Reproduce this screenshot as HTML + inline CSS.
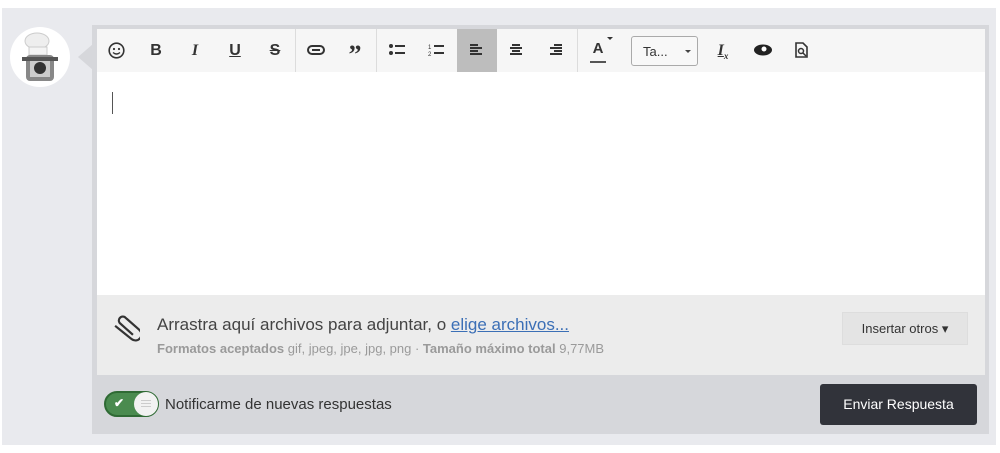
<!DOCTYPE html><html><head><style>
*{margin:0;padding:0;box-sizing:border-box}
body{width:1000px;height:453px;background:#fff;font-family:"Liberation Sans",sans-serif;position:relative;overflow:hidden}
.bg{position:absolute;left:2px;top:8px;width:994px;height:437px;background:#e9eaee}
.av{position:absolute;left:10px;top:27px;width:60px;height:60px;border-radius:50%;background:#fff;overflow:hidden}
.arrow{position:absolute;left:78px;top:44px;width:0;height:0;border-top:13px solid transparent;border-bottom:13px solid transparent;border-right:15px solid #d6d7db}
.box{position:absolute;left:92px;top:25px;width:897px;height:409px;background:#d6d7db}
.tb{position:absolute;left:97px;top:29px;width:888px;height:43px;background:#f6f6f6}
.ed{position:absolute;left:97px;top:72px;width:888px;height:223px;background:#fff}
.att{position:absolute;left:97px;top:295px;width:888px;height:80px;background:#ececec}
.b{position:absolute;top:29px;height:43px;width:40px;text-align:center;line-height:43px;font-size:16px;color:#333;font-weight:bold}
.sep{position:absolute;top:29px;width:1px;height:43px;background:#dcdcdc}
</style></head><body>
<div class="bg"></div>
<div class="av"><svg width="60" height="60"><ellipse cx="27" cy="14" rx="12" ry="8" fill="#eee" stroke="#ccc"/><rect x="19" y="20" width="18" height="8" fill="#f4f4f4" stroke="#ccc"/><rect x="16" y="28" width="28" height="26" rx="4" fill="#888"/><rect x="20" y="32" width="20" height="18" fill="#ccc"/><circle cx="30" cy="41" r="6" fill="#333"/><rect x="12" y="30" width="36" height="4" fill="#555"/></svg></div>
<div class="arrow"></div>
<div class="box"></div>
<div class="tb"></div>
<div class="ed"><div style="position:absolute;left:15px;top:20px;width:1px;height:22px;background:#555"></div></div>
<div class="att"></div>
<div style="position:absolute;left:457px;top:29px;width:40px;height:43px;background:#bdbdbd"></div>
<div class="sep" style="left:295px"></div><div class="sep" style="left:376px"></div><div class="sep" style="left:577px"></div>
<svg style="position:absolute;left:108px;top:42px" width="17" height="17"><circle cx="8.5" cy="8.5" r="7.3" fill="none" stroke="#333" stroke-width="1.6"/><circle cx="6" cy="7" r="1.1" fill="#333"/><circle cx="11" cy="7" r="1.1" fill="#333"/><path d="M5 10.5q3.5 3 7 0" fill="none" stroke="#333" stroke-width="1.4"/></svg>
<div class="b" style="left:136px">B</div>
<div class="b" style="left:175px;font-style:italic;font-family:'Liberation Serif',serif">I</div>
<div class="b" style="left:215px;text-decoration:underline">U</div>
<div class="b" style="left:255px;text-decoration:line-through">S</div>
<svg style="position:absolute;left:307px;top:45px" width="18" height="10"><rect x="1" y="1" width="16" height="8" rx="4" fill="none" stroke="#333" stroke-width="2"/><rect x="5" y="4" width="8" height="2" fill="#333"/></svg>
<div class="b" style="left:335px;font-family:'Liberation Serif',serif;font-size:26px;line-height:52px">”</div>
<svg style="position:absolute;left:388px;top:43px" width="18" height="14"><circle cx="3" cy="3" r="2" fill="#333"/><circle cx="3" cy="10" r="2" fill="#333"/><rect x="7" y="2" width="10" height="2" fill="#333"/><rect x="7" y="9" width="10" height="2" fill="#333"/></svg>
<svg style="position:absolute;left:428px;top:43px" width="18" height="14"><text x="0" y="6" font-size="6" fill="#333">1</text><text x="0" y="13" font-size="6" fill="#333">2</text><rect x="6" y="2" width="10" height="2" fill="#333"/><rect x="6" y="9" width="10" height="2" fill="#333"/></svg>
<svg style="position:absolute;left:470px;top:44px" width="14" height="12"><rect x="0" y="0" width="8" height="2" fill="#333"/><rect x="0" y="3" width="12" height="2" fill="#333"/><rect x="0" y="6" width="8" height="2" fill="#333"/><rect x="0" y="9" width="12" height="2" fill="#333"/></svg>
<svg style="position:absolute;left:509px;top:44px" width="14" height="12"><rect x="3" y="0" width="8" height="2" fill="#333"/><rect x="1" y="3" width="12" height="2" fill="#333"/><rect x="3" y="6" width="8" height="2" fill="#333"/><rect x="1" y="9" width="12" height="2" fill="#333"/></svg>
<svg style="position:absolute;left:549px;top:44px" width="14" height="12"><rect x="5" y="0" width="8" height="2" fill="#333"/><rect x="1" y="3" width="12" height="2" fill="#333"/><rect x="5" y="6" width="8" height="2" fill="#333"/><rect x="1" y="9" width="12" height="2" fill="#333"/></svg>
<div class="b" style="left:578px;font-size:15px;line-height:40px">A</div>
<div style="position:absolute;left:590px;top:61px;width:16px;height:2px;background:#555"></div>
<div style="position:absolute;left:607px;top:37px;border-left:3px solid transparent;border-right:3px solid transparent;border-top:3px solid #333"></div>
<div style="position:absolute;left:631px;top:36px;width:67px;height:30px;border:1px solid #aaa;border-radius:3px;background:#f8f8f8;font-size:13px;color:#333;padding:7px 0 0 11px">Ta...<span style="position:absolute;left:53px;top:13px;border-left:3px solid transparent;border-right:3px solid transparent;border-top:3px solid #444"></span></div>
<div class="b" style="left:703px;font-style:italic;font-family:'Liberation Serif',serif;text-decoration:underline">I<sub style="font-size:9px;text-decoration:none">x</sub></div>
<svg style="position:absolute;left:754px;top:44px" width="18" height="12"><ellipse cx="9" cy="6" rx="9" ry="5.5" fill="#222"/><circle cx="10" cy="5" r="2.5" fill="#fff"/></svg>
<svg style="position:absolute;left:795px;top:42px" width="13" height="16"><path d="M1 1h7l4 4v10H1z" fill="none" stroke="#333" stroke-width="1.6"/><circle cx="6" cy="9" r="2.5" fill="none" stroke="#333" stroke-width="1.5"/><path d="M8 11l3 3" stroke="#333" stroke-width="1.5"/></svg>
<svg style="position:absolute;left:112px;top:314px" width="28" height="32" viewBox="0 0 28 32"><path d="M20 22L9 8a4 4 0 0 1 6-5l12 15a6 6 0 0 1-9 8L4 10" fill="none" stroke="#333" stroke-width="2.2" transform="rotate(-10 14 16)"/></svg>
<div style="position:absolute;left:157px;top:315px;font-size:17px;color:#444">Arrastra aquí archivos para adjuntar, o <span style="color:#3b6fb6;text-decoration:underline">elige archivos...</span></div>
<div style="position:absolute;left:157px;top:341px;font-size:13px;color:#9a9a9a"><b>Formatos aceptados</b> gif, jpeg, jpe, jpg, png · <b>Tamaño máximo total</b> 9,77MB</div>
<div style="position:absolute;left:842px;top:312px;width:126px;height:33px;background:#e4e4e4;border:1px solid #ddd;font-size:13px;color:#333;text-align:center;line-height:31px">Insertar otros ▾</div>
<div style="position:absolute;left:104px;top:391px;width:55px;height:26px;border-radius:13px;background:#4a8b4f;border:2px solid #2f6a34"></div>
<div style="position:absolute;left:114px;top:396px;color:#fff;font-size:12px;font-weight:bold">✔</div>
<div style="position:absolute;left:134px;top:392px;width:24px;height:24px;border-radius:50%;background:#f2f2f2"></div>
<div style="position:absolute;left:141px;top:400px;width:10px;height:1px;background:#ccc;box-shadow:0 3px 0 #ccc,0 6px 0 #ccc"></div>
<div style="position:absolute;left:165px;top:396px;font-size:15px;color:#333">Notificarme de nuevas respuestas</div>
<div style="position:absolute;left:820px;top:384px;width:157px;height:41px;background:#31333a;border-radius:3px;color:#fff;font-size:14px;text-align:center;line-height:41px">Enviar Respuesta</div>
</body></html>
